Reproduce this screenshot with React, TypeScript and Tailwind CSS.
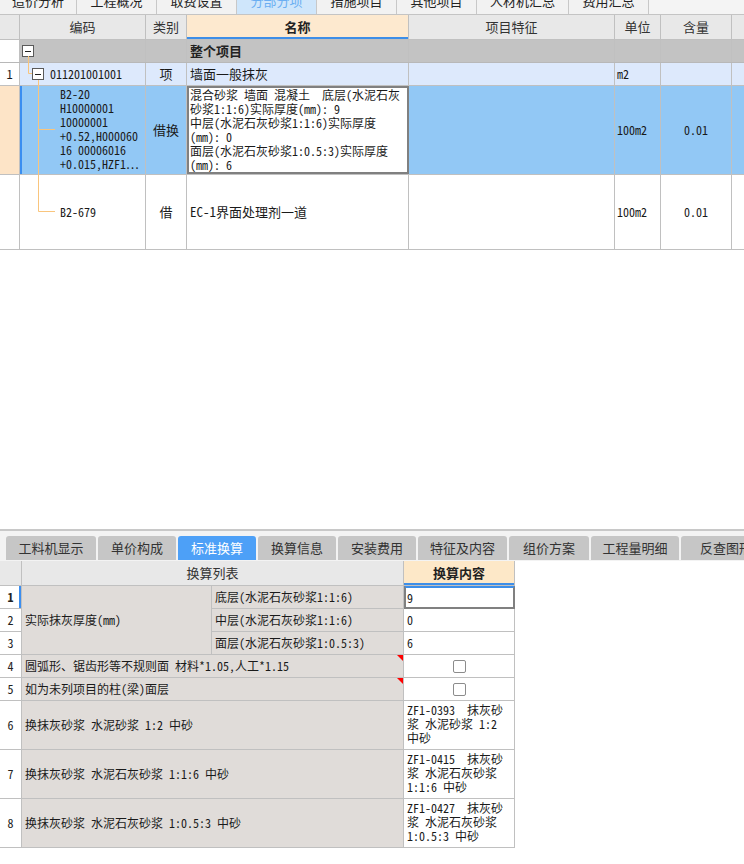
import React from "react";

const sans = "font-['Noto_Sans_CJK_SC',sans-serif]";
const mono = "font-['Noto_Sans_Mono_CJK_SC','Noto_Sans_CJK_SC',monospace]";

const topTabs = [
  { t: "造价分析", w: "w-[77px]" },
  { t: "工程概况", w: "w-[80px]" },
  { t: "取费设置", w: "w-[80px]" },
  { t: "分部分项", w: "w-[80px]", active: true },
  { t: "措施项目", w: "w-[80px]" },
  { t: "其他项目", w: "w-[80px]" },
  { t: "人材机汇总", w: "w-[92px]" },
  { t: "费用汇总", w: "w-[80px]" },
];

const bottomTabs = [
  { t: "工料机显示", w: "w-[90px]" },
  { t: "单价构成", w: "w-[78px]" },
  { t: "标准换算", w: "w-[78px]", active: true },
  { t: "换算信息", w: "w-[78px]" },
  { t: "安装费用", w: "w-[78px]" },
  { t: "特征及内容", w: "w-[89px]" },
  { t: "组价方案", w: "w-[80px]" },
  { t: "工程量明细", w: "w-[88px]" },
  { t: "反查图形", w: "w-[90px]" },
];

const cell = "shrink-0 border-r border-[#c0c0c0] h-full";

function Minus() {
  return (
    <div className="w-[12px] h-[12px] border border-[#5a5a5a] bg-white flex items-center justify-center shrink-0">
      <div className="w-[6px] h-[1px] bg-[#222]" />
    </div>
  );
}

function Check() {
  return <div className="w-[13px] h-[13px] rounded-[2px] border border-[#8c8c8c] bg-white" />;
}

function RedTri() {
  return (
    <div className="absolute top-0 right-0 w-0 h-0 border-t-[6px] border-l-[6px] border-t-[#ff0000] border-l-transparent" />
  );
}

export default function App() {
  const rowLbl = "bg-[#e0dcd9] border-r border-b border-[#c0c0c0]";
  const rowNum = "bg-white border-r border-b border-[#c0c0c0] flex items-center justify-center text-[12px] text-[#222]";
  const content = "bg-white border-r border-b border-[#c0c0c0]";
  return (
    <div className={`w-[744px] h-[864px] bg-white overflow-hidden text-[#1a1a1a] ${sans}`}>
      <div className="relative">
        {/* top tabs */}
        <div className="flex h-[15px] bg-[#f4f4f4] border-b border-[#c4c4c4]">
          {topTabs.map((tb) => (
            <div
              key={tb.t}
              className={`${tb.w} shrink-0 h-full overflow-hidden border-r border-[#c8c8c8] ${tb.active ? "bg-[#cfe6fb] text-[#6aaef2]" : "bg-[#f2f2f2] text-[#222]"}`}
            >
              <div className="-mt-[6px] text-[13px] leading-[14px] text-center">{tb.t}</div>
            </div>
          ))}
        </div>
        {/* header */}
        <div className="flex h-[25px] bg-[#e8e8e8] border-b border-[#c0c0c0] text-[13px] text-[#333]">
          <div className={`${cell} w-[20px]`} />
          <div className={`${cell} w-[126px] flex items-center justify-center`}>编码</div>
          <div className={`${cell} w-[41px] flex items-center justify-center`}>类别</div>
          <div className={`${cell} w-[222px] flex items-center justify-center bg-[#fde9cf] font-bold text-[#222] shadow-[inset_0_-2px_0_#3d8ee8]`}>名称</div>
          <div className={`${cell} w-[206px] flex items-center justify-center`}>项目特征</div>
          <div className={`${cell} w-[46px] flex items-center justify-center`}>单位</div>
          <div className={`${cell} w-[71px] flex items-center justify-center`}>含量</div>
          <div className="flex-1" />
        </div>
        {/* row 0 */}
        <div className="flex h-[23px] bg-[#c3c3c3] border-b border-[#b8b8b8]">
          <div className={`${cell} w-[20px] bg-white`} />
          <div className={`${cell} w-[126px] flex items-center pl-[2px]`}>
            <Minus />
          </div>
          <div className={`${cell} w-[41px]`} />
          <div className={`${cell} w-[222px] flex items-center pl-[3px] text-[13px] font-bold text-[#222]`}>整个项目</div>
          <div className={`${cell} w-[206px]`} />
          <div className={`${cell} w-[46px]`} />
          <div className={`${cell} w-[71px]`} />
          <div className="flex-1" />
        </div>
        {/* row 1 */}
        <div className="flex h-[23px] bg-[#dde9fc] border-b border-[#c0c0c0]">
          <div className={`${cell} w-[20px] bg-white flex items-center justify-center text-[12px]`}>1</div>
          <div className={`${cell} w-[126px] flex items-center pl-[12px] gap-[6px]`}>
            <Minus />
            <span className={`${mono} text-[12px]`}>011201001001</span>
          </div>
          <div className={`${cell} w-[41px] flex items-center justify-center text-[13px]`}>项</div>
          <div className={`${cell} w-[222px] flex items-center pl-[3px] text-[13px]`}>墙面一般抹灰</div>
          <div className={`${cell} w-[206px]`} />
          <div className={`${cell} w-[46px] flex items-center pl-[2px] ${mono} text-[12px]`}>m2</div>
          <div className={`${cell} w-[71px]`} />
          <div className="flex-1" />
        </div>
        {/* row 2 */}
        <div className="flex h-[89px] bg-[#92c8f5] border-b border-[#c0c0c0]">
          <div className={`${cell} w-[20px] bg-[#fde4c7]`} />
          <div className={`${cell} w-[126px] pl-[40px] pt-[1px] shadow-[inset_2px_0_0_#3b8ef0] ${mono} text-[12px] leading-[14px] whitespace-pre`}>
            {"B2-20\nH10000001\n10000001\n+0.52,H000060\n16 00006016\n+0.015,HZF1…"}
          </div>
          <div className={`${cell} w-[41px] flex items-center justify-center text-[13px]`}>借换</div>
          <div className={`shrink-0 h-[88px] w-[222px] bg-white border-2 border-[#808080] px-[1px] pt-0 ${mono} text-[12px] leading-[14px] whitespace-pre overflow-hidden`}>
            {"混合砂浆 墙面 混凝土  底层(水泥石灰\n砂浆1:1:6)实际厚度(mm): 9\n中层(水泥石灰砂浆1:1:6)实际厚度\n(mm): 0\n面层(水泥石灰砂浆1:0.5:3)实际厚度\n(mm): 6"}
          </div>
          <div className={`${cell} w-[206px]`} />
          <div className={`${cell} w-[46px] flex items-center pl-[2px] ${mono} text-[12px]`}>100m2</div>
          <div className={`${cell} w-[71px] flex items-center justify-center ${mono} text-[12px]`}>0.01</div>
          <div className="flex-1" />
        </div>
        {/* row 3 */}
        <div className="flex h-[75px] bg-white border-b border-[#c0c0c0]">
          <div className={`${cell} w-[20px]`} />
          <div className={`${cell} w-[126px] flex items-center pl-[40px] ${mono} text-[12px]`}>B2-679</div>
          <div className={`${cell} w-[41px] flex items-center justify-center text-[13px]`}>借</div>
          <div className={`${cell} w-[222px] flex items-center pl-[3px] ${mono} text-[13px]`}>EC-1界面处理剂一道</div>
          <div className={`${cell} w-[206px]`} />
          <div className={`${cell} w-[46px] flex items-center pl-[2px] ${mono} text-[12px]`}>100m2</div>
          <div className={`${cell} w-[71px] flex items-center justify-center ${mono} text-[12px]`}>0.01</div>
          <div className="flex-1" />
        </div>
        {/* tree lines */}
        <svg className="absolute left-0 top-0 pointer-events-none" width="80" height="250">
          <g stroke="#f9c57d" strokeWidth="1" fill="none">
            <path d="M28.5 56 V73.5 H32" />
            <path d="M38.5 80 V211.5 H55" />
            <path d="M38.5 129.5 H55" />
          </g>
        </svg>
      </div>

      <div className="h-[279px] bg-white" />
      <div className="h-[2px] bg-[#c8c8c8]" />
      {/* bottom tabs */}
      <div className="h-[30px] bg-[#f3f3f3] flex gap-[2px] pl-[6px] pt-[5px]">
        {bottomTabs.map((tb) => (
          <div
            key={tb.t}
            className={`${tb.w} shrink-0 h-[24px] rounded-t-[3px] flex items-center justify-center text-[13px] ${tb.active ? "bg-[#4da0f7] text-white" : "bg-[#c6c6c6] text-[#333]"}`}
          >
            {tb.t}
          </div>
        ))}
      </div>
      {/* bottom table */}
      <div className="w-[515px]">
        <div className="flex h-[25px] border-b border-[#c0c0c0] text-[13px] text-[#333]">
          <div className="w-[22px] shrink-0 bg-[#e8e8e8] border-r border-[#c0c0c0]" />
          <div className="w-[382px] shrink-0 bg-[#e8e8e8] border-r border-[#c0c0c0] flex items-center justify-center">换算列表</div>
          <div className="w-[111px] shrink-0 bg-[#fde8c8] border-r border-[#c0c0c0] flex items-center justify-center font-bold text-[#222] shadow-[inset_0_-2px_0_#3d8ee8]">换算内容</div>
        </div>
        <div className={`grid grid-cols-[22px_190px_192px_111px] grid-rows-[23px_23px_23px_23px_23px_49px_49px_49px] ${mono} text-[12px]`}>
          <div className={`${rowNum} bg-[#fde4c7] font-bold shadow-[inset_-2px_0_0_#3b8ef0]`}>1</div>
          <div className={`${rowLbl} row-span-3 flex items-center pl-[3px]`}>实际抹灰厚度(mm)</div>
          <div className={`${rowLbl} flex items-center pl-[3px]`}>底层(水泥石灰砂浆1:1:6)</div>
          <div className="bg-white border-2 border-[#808080] border-t-[#3d8ee8] flex items-center pl-[1px]">9</div>

          <div className={rowNum}>2</div>
          <div className={`${rowLbl} flex items-center pl-[3px]`}>中层(水泥石灰砂浆1:1:6)</div>
          <div className={`${content} flex items-center pl-[3px]`}>0</div>

          <div className={rowNum}>3</div>
          <div className={`${rowLbl} flex items-center pl-[3px]`}>面层(水泥石灰砂浆1:0.5:3)</div>
          <div className={`${content} flex items-center pl-[3px]`}>6</div>

          <div className={rowNum}>4</div>
          <div className={`${rowLbl} col-span-2 relative flex items-center pl-[3px]`}>
            圆弧形、锯齿形等不规则面 材料*1.05,人工*1.15
            <RedTri />
          </div>
          <div className={`${content} flex items-center justify-center`}>
            <Check />
          </div>

          <div className={rowNum}>5</div>
          <div className={`${rowLbl} col-span-2 relative flex items-center pl-[3px]`}>
            如为未列项目的柱(梁)面层
            <RedTri />
          </div>
          <div className={`${content} flex items-center justify-center`}>
            <Check />
          </div>

          <div className={rowNum}>6</div>
          <div className={`${rowLbl} col-span-2 flex items-center pl-[3px]`}>换抹灰砂浆 水泥砂浆 1:2 中砂</div>
          <div className={`${content} pl-[3px] pt-[2px] leading-[14px] whitespace-pre`}>{"ZF1-0393  抹灰砂\n浆 水泥砂浆 1:2\n中砂"}</div>

          <div className={rowNum}>7</div>
          <div className={`${rowLbl} col-span-2 flex items-center pl-[3px]`}>换抹灰砂浆 水泥石灰砂浆 1:1:6 中砂</div>
          <div className={`${content} pl-[3px] pt-[2px] leading-[14px] whitespace-pre`}>{"ZF1-0415  抹灰砂\n浆 水泥石灰砂浆\n1:1:6 中砂"}</div>

          <div className={rowNum}>8</div>
          <div className={`${rowLbl} col-span-2 flex items-center pl-[3px]`}>换抹灰砂浆 水泥石灰砂浆 1:0.5:3 中砂</div>
          <div className={`${content} pl-[3px] pt-[2px] leading-[14px] whitespace-pre`}>{"ZF1-0427  抹灰砂\n浆 水泥石灰砂浆\n1:0.5:3 中砂"}</div>
        </div>
      </div>
    </div>
  );
}
